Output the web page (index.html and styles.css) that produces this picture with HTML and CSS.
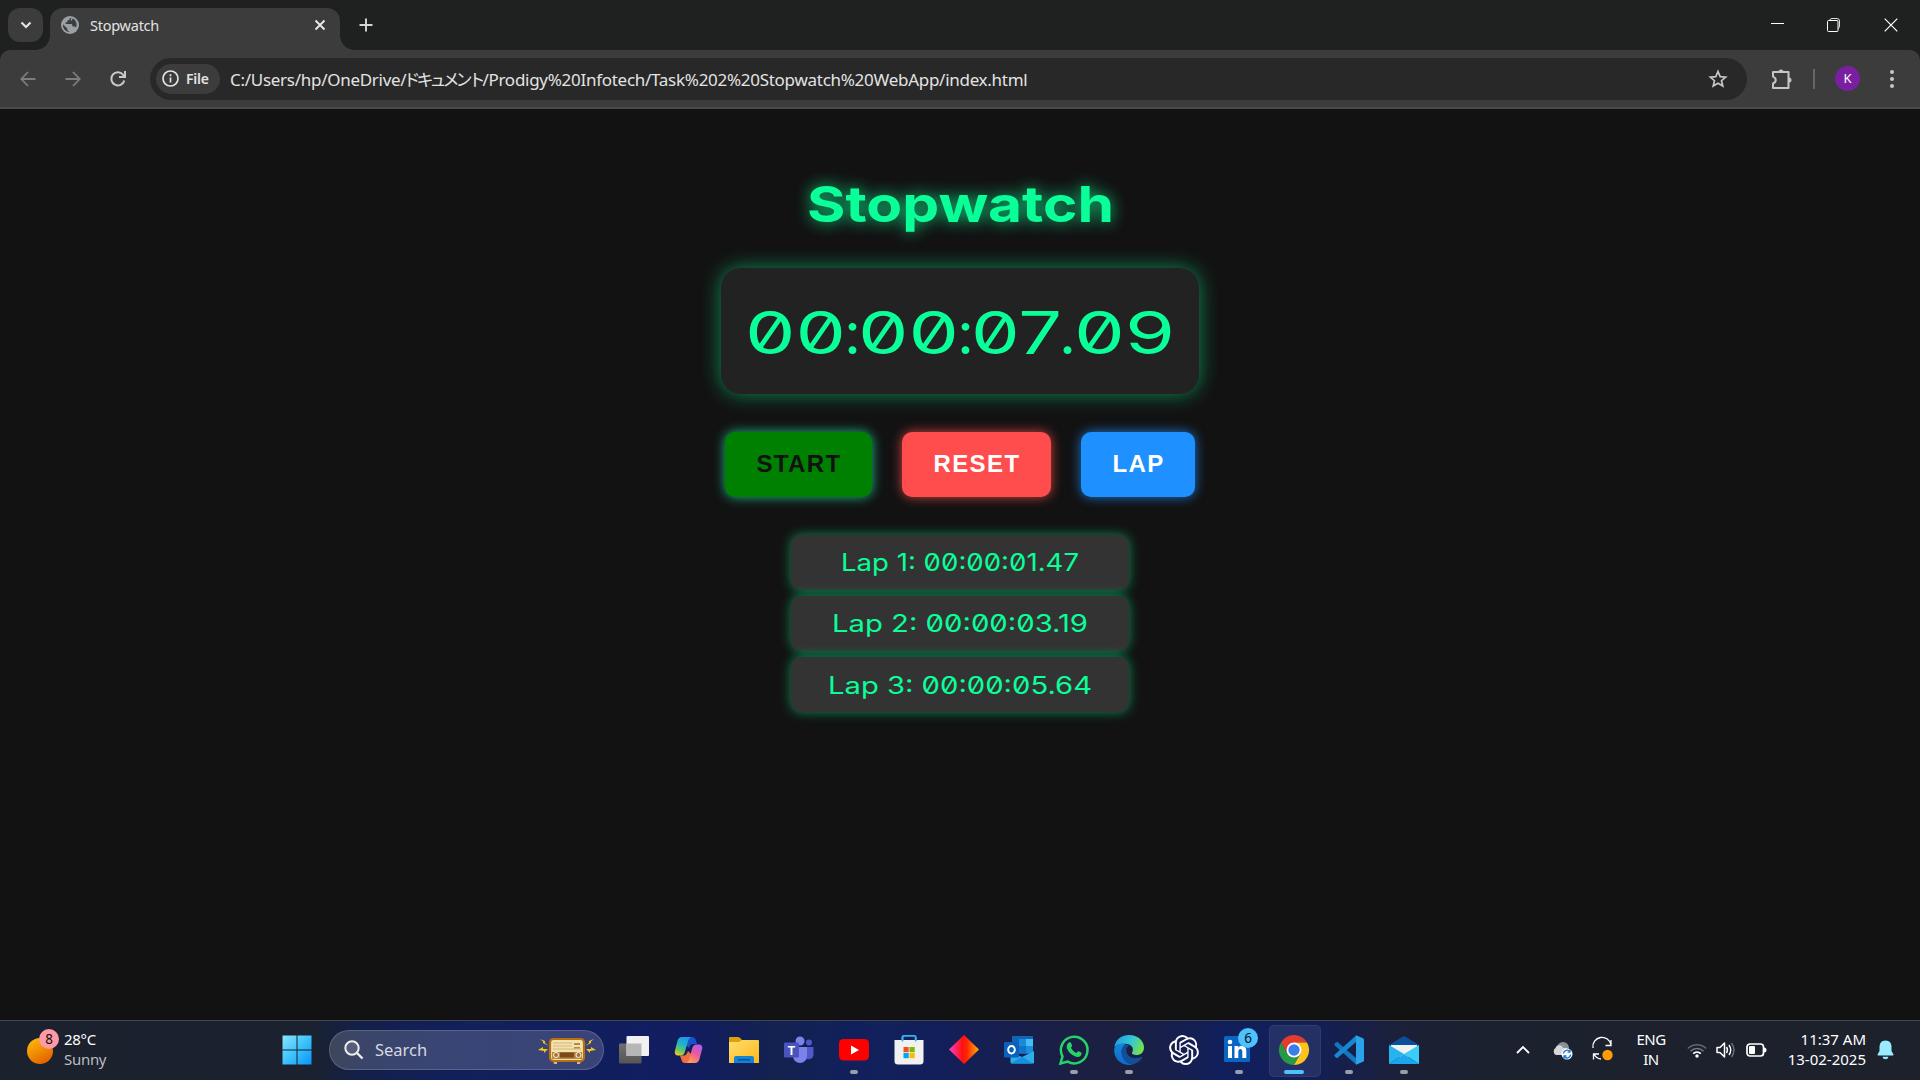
FILE: index.html
```html
<!DOCTYPE html>
<html lang="en">
<head>
<meta charset="utf-8">
<title>Stopwatch</title>
<link rel="stylesheet" href="styles.css">
</head>
<body>
<header class="tabstrip">
  <div class="tab-search"><svg width="12" height="8" viewBox="0 0 12 8"><path d="M1.500 1.500 6 6l4.500-4.500" fill="none" stroke="#e3e3e3" stroke-width="2.200"/></svg></div>
  <div class="tab">
    <svg class="globe" width="18" height="18" viewBox="0 0 18 18"><circle cx="9" cy="9" r="9" fill="#9aa0a6"/><path d="M10.500 1.800C9 2 8.200 3 8.200 4.300H6.400v1.900H4.600V8h5.200c1 0 1.700.7 1.700 1.700v.9h1.800c.8 0 1.500.5 1.700 1.200A7.200 7.200 0 0 0 11.700 2.300L11 4.500H9.500M1.900 8.200 6.300 12.500v.9c0 1 .8 1.700 1.800 1.700v1A7.200 7.200 0 0 1 1.900 8.200z" fill="#3c3c3c"/></svg>
    <span class="tab-title">Stopwatch</span>
    <svg width="12" height="12" viewBox="0 0 12 12"><path d="m1.500 1.500 9 9m0-9-9 9" stroke="#e8e8e8" stroke-width="1.900"/></svg>
  </div>
  <svg class="new-tab" width="14" height="14" viewBox="0 0 14 14"><path d="M7 .5v13M.5 7h13" stroke="#d5d5d5" stroke-width="1.900"/></svg>
  <div class="window-controls">
    <svg width="14" height="14" viewBox="0 0 14 14"><path d="M1 5.500h13" stroke="#fff"/></svg>
    <svg width="14" height="14" viewBox="0 0 14 14"><path d="M2.500 3V2.500Q3 .5 5 .5h5q2.500 0 2.500 2.500v5q0 2-1.500 2.500" fill="none" stroke="#ddd"/><rect x=".5" y="2.500" width="10.500" height="11" rx="1" fill="none" stroke="#fff"/></svg>
    <svg width="14" height="14" viewBox="0 0 14 14"><path d="m.7.700 12.600 12.600m0-12.600L.7 13.300" stroke="#fff" stroke-width="1.200"/></svg>
  </div>
</header>
<nav class="toolbar">
  <div class="nav-buttons">
    <svg width="16" height="16" viewBox="0 0 16 16"><path d="M15.500 8H1.500M8 1 1.300 8 8 15" fill="none" stroke="#7d7d7d" stroke-width="1.800"/></svg>
    <svg width="16" height="16" viewBox="0 0 16 16"><path d="M.5 8h14M8 1l6.700 7L8 15" fill="none" stroke="#7d7d7d" stroke-width="1.800"/></svg>
    <svg width="16" height="16" viewBox="0 0 16 16"><path d="M14.300 9.500A6.600 6.600 0 1 1 13 3.600l1.500 1.700M15 0v6H9" fill="none" stroke="#c9c9c9" stroke-width="2"/></svg>
  </div>
  <div class="omnibox">
    <div class="chip">
      <svg width="17" height="17" viewBox="0 0 17 17"><circle cx="8.500" cy="8.500" r="7.500" fill="none" stroke="#e3e3e3" stroke-width="1.700"/><path d="M8.500 7.500v5M8.500 4.300v1.900" stroke="#e3e3e3" stroke-width="1.700"/></svg>
      <span>File</span>
    </div>
    <span class="url">C:/Users/hp/OneDrive/<span class="kana">ドキュメント</span>/Prodigy%20Infotech/Task%202%20Stopwatch%20WebApp/index.html</span>
    <svg class="star" width="20" height="20" viewBox="0 0 20 20"><path d="m10 2.500 2.200 5.100 5.500.5-4.200 3.600 1.300 5.400L10 14.300l-4.800 2.800 1.300-5.400L2.300 8.100l5.500-.5z" fill="none" stroke="#c7c7c7" stroke-width="1.700"/></svg>
  </div>
  <div class="actions">
    <svg width="22" height="22" viewBox="0 0 22 22"><path d="M2 4h15.500v16H2v-4.600q2.700-.9 2.700-3.400T2 8.600z" fill="none" stroke="#c7c7c7" stroke-width="2" stroke-linejoin="round"/><path d="M7.500 4a2.500 2.500 0 0 1 5 0M18 9.500a2.500 2.500 0 0 1 0 5" fill="#c7c7c7"/></svg>
    <span class="divider"></span>
    <span class="avatar">K</span>
    <svg width="6" height="20" viewBox="0 0 6 20"><g fill="#c7c7c7"><circle cx="3" cy="3" r="2"/><circle cx="3" cy="10" r="2"/><circle cx="3" cy="17" r="2"/></g></svg>
  </div>
</nav>
<main class="page">
  <svg class="title" width="344" height="80"><text x="19" y="53" textLength="307" lengthAdjust="spacingAndGlyphs">Stopwatch</text></svg>
  <section class="display"><svg width="478" height="126"><text y="86"><tspan x="24" textLength="101" lengthAdjust="spacingAndGlyphs">00</tspan><tspan x="123">:</tspan><tspan x="137" textLength="101" lengthAdjust="spacingAndGlyphs">00</tspan><tspan x="236">:</tspan><tspan x="250" textLength="91" lengthAdjust="spacingAndGlyphs">07</tspan><tspan x="338">.</tspan><tspan x="353" textLength="101" lengthAdjust="spacingAndGlyphs">09</tspan></text></svg></section>
  <div class="buttons">
    <button class="btn start">START</button>
    <button class="btn reset">RESET</button>
    <button class="btn lap">LAP</button>
  </div>
  <ul class="laps">
    <li><svg width="338" height="55"><text x="50" y="36" textLength="238" lengthAdjust="spacingAndGlyphs">Lap 1: 00:00:01.47</text></svg></li>
    <li><svg width="338" height="55"><text x="41" y="36" textLength="256" lengthAdjust="spacingAndGlyphs">Lap 2: 00:00:03.19</text></svg></li>
    <li><svg width="338" height="55"><text x="37" y="37" textLength="264" lengthAdjust="spacingAndGlyphs">Lap 3: 00:00:05.64</text></svg></li>
  </ul>
</main>
<footer class="taskbar">
  <div class="weather">
    <svg width="34" height="38" viewBox="0 0 34 38"><defs><linearGradient id="sun" x1="0" y1="0" x2=".6" y2="1"><stop offset="0" stop-color="#ffc20a"/><stop offset="1" stop-color="#e56300"/></linearGradient></defs><circle cx="14" cy="23" r="13" fill="url(#sun)"/><circle cx="23" cy="11" r="10" fill="#ff99a4"/><text x="23" y="16" text-anchor="middle" class="badge-text">8</text></svg>
    <div class="weather-text"><span>28°C</span><span class="dim">Sunny</span></div>
  </div>
  <div class="slot"><svg width="30" height="30" viewBox="0 0 30 30"><defs><linearGradient id="win" x1="0" y1="0" x2="1" y2="1"><stop offset="0" stop-color="#8ae4ff"/><stop offset=".5" stop-color="#3cc3fb"/><stop offset="1" stop-color="#0a94f8"/></linearGradient></defs><path d="M.5.500h14v14H.5zM15.500.500h14v14h-14zM.5 15.500h14v14H.5zM15.500 15.500h14v14h-14z" fill="url(#win)"/></svg></div>
  <div class="search">
    <svg width="20" height="20" viewBox="0 0 20 20"><circle cx="8" cy="8" r="6.700" fill="#ffffff22" stroke="#eee" stroke-width="2"/><path d="m13 13 5.500 5.500" stroke="#eee" stroke-width="2.400"/></svg>
    <span>Search</span>
    <svg class="radio" width="58" height="28" viewBox="0 0 58 28"><g fill="#f5c518"><path d="m2 3 5 2v2l4 3-6-3V5.500zM0 14l5-3v2h5l-4 4v-2zM56 3l-5 2v2l-4 3 6-3V5.500zM58 14l-5-3v2h-5l4 4v-2z"/></g><path d="M15 25h4v3h-3zM39 25h4l-1 3h-3z" fill="#d9b67a"/><rect x="12" y="3" width="34" height="22" rx="3.500" fill="#f3e2b0" stroke="#b8700f" stroke-width="2.200"/><path d="M15 7h19M15 10h19M15 13h28" stroke="#c9ad6a" stroke-width=".8"/><path d="M36 7h6v2h-6zM36 11h6v1.500h-6z" fill="#b88a3c"/><path d="M14 16h30v7H14z" fill="#b58a48"/><path d="M22 16.500h14v5H22z" fill="#7c4a16"/><circle cx="18" cy="19" r="2.500" fill="#9b7542" stroke="#fff3cf"/><circle cx="40.500" cy="19" r="2.500" fill="#9b7542" stroke="#fff3cf"/></svg>
  </div>
  <div class="apps">
    <div class="slot"><svg width="30" height="30" viewBox="0 0 30 30"><defs><linearGradient id="tv" x1="0" y1="0" x2="0" y2="1"><stop offset="0" stop-color="#707070"/><stop offset="1" stop-color="#555"/></linearGradient></defs><rect y="8.500" width="22.500" height="20" rx="1" fill="url(#tv)"/><rect x="7.500" y="1" width="22.500" height="20" rx="1" fill="#f1f1f1"/><path d="M7.500 8.500h15V21h-15z" fill="#b6b6b6"/></svg></div>
    <div class="slot"><svg width="30" height="30" viewBox="0 0 30 30"><defs><linearGradient id="cpa" x1=".6" y1="0" x2=".2" y2="1"><stop offset="0" stop-color="#2095ee"/><stop offset=".4" stop-color="#1db7c5"/><stop offset=".75" stop-color="#74c65d"/><stop offset="1" stop-color="#f6cd13"/></linearGradient><linearGradient id="cpb" x1=".8" y1="0" x2=".3" y2="1"><stop offset="0" stop-color="#b05af0"/><stop offset=".5" stop-color="#ea5a9b"/><stop offset="1" stop-color="#ff9e55"/></linearGradient></defs><path d="M13 2h5c2 0 3.200 1 3.800 3L23 9h-4c-2 0-3 1-4 4l-3-3z" fill="#1754c9"/><path d="M16 28h-5c-2 0-3-1-3.500-3L6 20.500h4c2 0 3-2 4-4.500l3 3z" fill="#ef703c"/><path d="M8 2h9c-2 1-2.700 3-3.200 5l-2.800 9.500c-.8 3-2.200 4-4.200 4H4.500c-3 0-4.300-2-3.500-5L3.500 6C4.200 3.200 5.500 2 8 2z" fill="url(#cpa)"/><path d="M21 28h-8.500c2-1 2.500-3 3-5l2.700-9.500c.8-3 2.200-4 4.200-4h2.300c3 0 4.200 2 3.300 5L25.500 24c-.8 2.800-2 4-4.500 4z" fill="url(#cpb)"/></svg></div>
    <div class="slot"><svg width="30" height="30" viewBox="0 0 30 30"><defs><linearGradient id="fo" x1="0" y1="0" x2="1" y2="1"><stop offset="0" stop-color="#ffdf6e"/><stop offset="1" stop-color="#fbb81b"/></linearGradient></defs><path d="M0 3q0-1 1-1h8q2 0 4 3h8v8H0z" fill="#dfa00c"/><path d="M0 7h10l3-2h16q1 0 1 1v22H0z" fill="url(#fo)"/><path d="M5 28v-5q0-2 2-2h16q2 0 2 2v5z" fill="#1383d4"/><path d="M9 24.700h12" stroke="#084b86" stroke-width="1.300"/></svg></div>
    <div class="slot"><svg width="30" height="30" viewBox="0 0 30 30"><circle cx="16" cy="6" r="4.500" fill="#7b83eb"/><circle cx="25" cy="7.500" r="3" fill="#5059c9"/><path d="M20 12h9.500v7.500a5 5 0 0 1-9.500 2z" fill="#5059c9"/><path d="M9 12h14v9a7 7 0 0 1-14 0z" fill="#7b83eb"/><rect y="7.500" width="15" height="15" rx="1.200" fill="#4b53bc"/><text x="7.500" y="19.500" text-anchor="middle" class="logo-t">T</text></svg></div>
    <div class="slot running"><svg width="30" height="30" viewBox="0 0 30 30"><rect y="4" width="30" height="21.500" rx="4.500" fill="#f00"/><path d="m12 10.500 8 4.500-8 4.500z" fill="#fff"/></svg></div>
    <div class="slot"><svg width="30" height="30" viewBox="0 0 30 30"><path d="M8.500 8V2q0-1.200 1.200-1.200h10.800q1.200 0 1.200 1.200v6" fill="none" stroke="#31b7ef" stroke-width="1.800"/><path d="M.5 5h29v21q0 3.500-3.500 3.500H4Q.5 29.500.5 26z" fill="#f1f1f1"/><path d="M8.500 2v4.500M21.700 2v4.500" stroke="#31b7ef" stroke-width="1.700"/><path d="M9.500 12h5.200v5.200H9.500z" fill="#f25022"/><path d="M15.500 12h5.200v5.200h-5.200z" fill="#7fba00"/><path d="M9.500 18h5.200v5.200H9.500z" fill="#00a4ef"/><path d="M15.500 18h5.200v5.200h-5.200z" fill="#ffb900"/></svg></div>
    <div class="slot"><svg width="30" height="30" viewBox="0 0 30 30"><defs><linearGradient id="dm"><stop offset="0" stop-color="#ff3fc5"/><stop offset=".45" stop-color="#ff1010"/><stop offset=".6" stop-color="#ff2600"/><stop offset="1" stop-color="#ffb300"/></linearGradient></defs><path d="m15 0 15 14.500L15 29 0 14.500z" fill="url(#dm)"/></svg></div>
    <div class="slot"><svg width="30" height="30" viewBox="0 0 30 30"><path d="M9 1h19q1 0 1 1v17H8V2q0-1 1-1z" fill="#1066b5"/><path d="M15 4h7v7h-7z" fill="#1b8ad8"/><path d="M22 4h7v7h-7z" fill="#42c0f5"/><path d="M15 11h7v7h-7z" fill="#1473c5"/><path d="M22 11h7v7h-7z" fill="#1b8fdf"/><path d="M6.500 17 18 22l12-6v11.500q0 1-1 1H8q-1.500 0-1.500-1.500z" fill="#2daee8"/><path d="m7 28.500 11-7 11 7z" fill="#1490df"/><rect y="7" width="15" height="15.500" rx="1.200" fill="#0a61bd"/><ellipse cx="7.500" cy="14.700" rx="3.300" ry="3.700" fill="none" stroke="#fff" stroke-width="2"/></svg></div>
    <div class="slot running"><svg width="30" height="30" viewBox="0 0 30 30"><path d="m1.500 28.500 2-7.200A13.300 13.300 0 1 1 8.700 26.600z" fill="none" stroke="#25d366" stroke-width="2.500"/><path d="M10 7.500c1-.6 1.800-.2 2.100.6l1 2.600c.2.500-.8 1.500-1.200 2 1.200 2.300 3 4 5.400 5.200.5-.4 1.500-2 2.200-1.700l2.700 1.400c.8.400.2 2.500-.7 3.300-1.300 1.200-3 1.400-5.200.6-4-1.500-7-4.600-8.300-8-.7-2.300 0-4.900 2-6z" fill="#25d366"/></svg></div>
    <div class="slot running"><svg width="30" height="30" viewBox="0 0 30 30"><defs><linearGradient id="ed" x1="0" y1=".2" x2="1" y2=".5"><stop offset="0" stop-color="#1e9be0"/><stop offset=".55" stop-color="#33c6d8"/><stop offset="1" stop-color="#72e34b"/></linearGradient><linearGradient id="ee" x1="0" y1="0" x2="0" y2="1"><stop offset="0" stop-color="#1387da"/><stop offset="1" stop-color="#1069c9"/></linearGradient></defs><path d="M.3 13C1 5 7 0 15 0c9 0 15 6 15 12.500 0 5-3.500 7.500-7.500 7.500-3.500 0-5-1.300-4.500-2.500 2-2.500 1-7.500-4.500-8.500C8 8 2 9 .3 13z" fill="url(#ed)"/><path d="M.2 14C2 9 7 7.500 12 9.500c-4 2-5 6-4 10 1 5 5 9 11 9.800C9 32-.5 25 .2 14z" fill="url(#ee)"/><path d="M12.500 9.500C7 12 6.500 18 9 22.500c2.300 4 6 6.500 10 6.700 4-1 7-3.200 9-6.300.5-1-.3-1.300-1-.9-6 2.500-15 .5-14.700-7 0-2.500 1.200-4.200 3.700-4.500z" fill="#114f9b"/></svg></div>
    <div class="slot"><svg width="30" height="30" viewBox="0 0 24 24" fill="#fff"><path d="M22.280 9.820a5.980 5.980 0 0 0-.52-4.910 6.050 6.050 0 0 0-6.510-2.900A6.070 6.070 0 0 0 4.980 4.180a5.980 5.980 0 0 0-4 2.900 6.050 6.050 0 0 0 .74 7.100 5.980 5.980 0 0 0 .51 4.910 6.050 6.050 0 0 0 6.520 2.900A5.980 5.980 0 0 0 13.260 24a6.060 6.060 0 0 0 5.770-4.210 5.990 5.990 0 0 0 4-2.900 6.060 6.060 0 0 0-.75-7.070zm-9.020 12.610a4.480 4.480 0 0 1-2.880-1.040l.14-.08 4.780-2.760a.8.8 0 0 0 .39-.68v-6.740l2.020 1.170a.07.07 0 0 1 .04.050v5.580a4.500 4.500 0 0 1-4.490 4.490zM3.600 18.300a4.470 4.470 0 0 1-.540-3.010l.14.090 4.780 2.760a.77.77 0 0 0 .78 0l5.840-3.370v2.330a.08.08 0 0 1-.03.060L9.740 19.950a4.500 4.500 0 0 1-6.140-1.650zM2.340 7.900a4.490 4.490 0 0 1 2.370-1.980v5.680a.77.77 0 0 0 .39.680l5.810 3.350-2.020 1.170a.08.08 0 0 1-.07 0l-4.830-2.790A4.500 4.500 0 0 1 2.340 7.870zm16.600 3.860L13.100 8.360l2.020-1.160a.08.08 0 0 1 .07 0l4.830 2.790a4.490 4.490 0 0 1-.68 8.100v-5.680a.79.79 0 0 0-.4-.650zm2.010-3.020-.14-.09-4.770-2.780a.78.78 0 0 0-.79 0L9.410 9.230V6.900a.07.07 0 0 1 .03-.06l4.830-2.790a4.500 4.500 0 0 1 6.680 4.660zM8.310 12.860l-2.020-1.160a.08.08 0 0 1-.04-.06V6.070a4.500 4.500 0 0 1 7.380-3.450l-.14.080-4.780 2.760a.8.8 0 0 0-.4.680zm1.100-2.370 2.600-1.500 2.610 1.500v3l-2.600 1.500-2.610-1.500z"/></svg></div>
    <div class="slot running"><svg width="36" height="36" viewBox="0 0 36 36" class="linkedin"><rect x="3" y="5" width="26" height="26" rx="1.500" fill="#0a66c2"/><path d="M7 15h4v12H7zM13.500 15h3.800v1.800c2-3.200 8-2.500 8 2.700V27h-4v-6.500c0-3.500-4-3.300-4 0V27h-3.800z" fill="#fff"/><circle cx="9" cy="11" r="2.300" fill="#fff"/><circle cx="27" cy="7" r="10" fill="#4cc2ff"/><text x="27" y="12" text-anchor="middle" class="badge-text">6</text></svg></div>
    <div class="slot running active"><svg width="30" height="30" viewBox="0 0 30 30"><path d="M2 7.500A15 15 0 0 1 28 7.500H15L8.500 18.700z" fill="#e33b2e"/><path d="M2 7.500A15 15 0 0 0 15 30l6.500-11.200H8.500z" fill="#279847"/><path d="M28 7.500A15 15 0 0 1 15 30l6.500-11.200L15 7.500z" fill="#fcc31e"/><circle cx="15" cy="15" r="7.500" fill="#fff"/><circle cx="15" cy="15" r="5.700" fill="#3b7ded"/></svg></div>
    <div class="slot running"><svg width="30" height="30" viewBox="0 0 30 30"><path d="m3.500 7 18.500 16v6.500L.8 10.500q-1-1 0-2l1-1q.8-.9 1.700-.5z" fill="#1277bd"/><path d="M3.500 23 22 7V.500L.8 19.500q-1 1 0 2l1 1q.8.900 1.700.5z" fill="#1687d0"/><path d="M22 .300 29 3.200q1 .5 1 1.500v20.600q0 1-1 1.500l-7 2.900z" fill="#2ba3ea"/></svg></div>
    <div class="slot running"><svg width="30" height="30" viewBox="0 0 30 30"><path d="M0 10 14 1.500q1-.6 2 0L30 10v10H0z" fill="#0b4f9c"/><path d="M2 10h26v8l-13 6-13-6z" fill="#f1f1f1"/><path d="M0 10l15 9-15 10z" fill="#27b4ee"/><path d="m30 10-15 9 15 10z" fill="#39cdfa"/><path d="M0 29h30L15 19z" fill="#1ba7ec"/></svg></div>
  </div>
  <div class="tray">
    <svg width="14" height="9" viewBox="0 0 14 9"><path d="m1 8 6-6 6 6" fill="none" stroke="#fff" stroke-width="1.800"/></svg>
    <svg class="cloud" width="21" height="20" viewBox="0 0 21 20"><circle cx="11" cy="8" r="6" fill="#8b8f96"/><path d="M4 15a4 4 0 0 1-.5-7C5 4 10 5 11 8h4v7z" fill="#d5d7da"/><circle cx="15" cy="14" r="5.500" fill="#fff"/><path d="M11.500 13.500a3.600 3.600 0 0 1 6.500-1.800m0-2v2.500h-2.500M18.500 14.500a3.600 3.600 0 0 1-6.500 2m0 2V16h2.500" fill="none" stroke="#1478d4" stroke-width="1.300"/></svg>
    <svg class="sync" width="22" height="22" viewBox="0 0 22 22"><path d="M1 9A9 9 0 0 1 19 6M19 1v5.500h-5.500M9 20q-5-.5-7-5M1.500 20.500V15H7" fill="none" stroke="#fff" stroke-width="1.300"/><circle cx="15.500" cy="16" r="5.200" fill="#ff9a0a"/></svg>
    <div class="lang"><span>ENG</span><span>IN</span></div>
    <svg class="wifi" width="20" height="16" viewBox="0 0 20 16"><path d="M.8 6.500a13 13 0 0 1 18.400 0" fill="none" stroke="#62666f" stroke-width="1.500"/><path d="M3.500 9.200a9.200 9.200 0 0 1 13 0" fill="none" stroke="#777b83" stroke-width="1.500"/><path d="M6.200 11.700a5.500 5.500 0 0 1 7.600 0" fill="none" stroke="#fff" stroke-width="1.700"/><circle cx="10" cy="14" r="1.700" fill="#fff"/></svg>
    <svg class="volume" width="20" height="18" viewBox="0 0 20 18"><path d="M1 6.500h3L8.500 2v14L4 11.500H1z" fill="none" stroke="#fff" stroke-width="1.500" stroke-linejoin="round"/><path d="M10.500 6q2 3 0 6M13 4q3.500 5 0 10" fill="none" stroke="#fff" stroke-width="1.400"/><path d="M15.500 2q5 7 0 14" fill="none" stroke="#6d7179" stroke-width="1.400"/></svg>
    <svg class="battery" width="21" height="14" viewBox="0 0 21 14"><rect x="1" y="1" width="16.500" height="12" rx="3" fill="none" stroke="#fff" stroke-width="1.700"/><rect x="3" y="3" width="6" height="8" rx="1" fill="#fff"/><path d="M18 4.500q2.500 0 2.500 2.500T18 9.500z" fill="#fff"/></svg>
    <div class="clock"><span class="time">11:37 AM</span><span class="date">13-02-2025</span></div>
    <svg class="bell" width="17" height="20" viewBox="0 0 17 20"><path d="M8.500.500c4 0 6 2.800 6 6.500v4l2 3.500q.3 1-.8 1H1.300q-1.100 0-.8-1l2-3.500V7c0-3.700 2-6.500 6-6.500zM5.500 16.700h6q-.5 2.500-3 2.500t-3-2.500z" fill="#99ebff"/></svg>
  </div>
</footer>
</body>
</html>
```
FILE: styles.css
```css
* { box-sizing: border-box; }
svg { display: block; flex: none; overflow: visible; }
body {
  margin: 0; width: 1920px; height: 1080px; overflow: hidden;
  display: flex; flex-direction: column;
  background: #121212;
  font-family: "Noto Sans", "Noto Sans CJK JP", sans-serif;
}

/* Browser frame */
.tabstrip { position: relative; z-index: 1; height: 50px; background: #1f2120; display: flex; align-items: flex-start; padding: 8px 0 0 8px; }
.tab-search { width: 35px; height: 34px; border-radius: 12px; background: #3c3c3c; display: grid; place-items: center; margin-right: 7px; }
.tab { position: relative; width: 290px; height: 42px; border-radius: 13px 13px 0 0; background: #3c3c3c; display: flex; align-items: center; padding: 0 14px 8px 11px; color: #e3e3e3; font-size: 14.500px; }
.tab::before, .tab::after { content: ""; position: absolute; bottom: 0; width: 14px; height: 14px; }
.tab::before { left: -14px; background: radial-gradient(circle at 0 0, transparent 13.500px, #3c3c3c 14px); }
.tab::after { right: -14px; background: radial-gradient(circle at 100% 0, transparent 13.500px, #3c3c3c 14px); }
.tab-title { flex: 1; padding-left: 11px; letter-spacing: -0.250px; }
.new-tab { margin: 10px 0 0 19px; }
.window-controls { margin-left: auto; display: flex; gap: 43px; padding: 10px 22px 0 0; }
.toolbar { position: relative; z-index: 0; height: 59px; background: #3c3c3c; border-bottom: 2px solid #4a4a4a; border-radius: 10px 10px 0 0; display: flex; align-items: center; box-shadow: 0 -10px 0 #1f2120; }
.nav-buttons { width: 150px; padding-left: 20px; display: flex; gap: 29px; }
.omnibox { width: 1597px; height: 42px; border-radius: 21px; background: #282828; display: flex; align-items: center; padding: 0 19px 0 6px; }
.chip { width: 64px; height: 30px; border-radius: 15px; background: #3c3c3c; display: flex; align-items: center; padding-left: 6px; gap: 7px; color: #e3e3e3; font-size: 14px; font-weight: 600; letter-spacing: -0.200px; }
.url { margin-left: 10px; flex: 1; font-size: 17px; letter-spacing: -0.280px; color: #e3e3e3; white-space: nowrap; }
.kana { display: inline-block; letter-spacing: -4px; margin: 0 1px 0 -3px; }
.actions { flex: 1; display: flex; align-items: center; padding-left: 24px; }
.divider { width: 2px; height: 20px; background: #666; margin: 0 20px 0 20px; }
.avatar { width: 25px; height: 25px; border-radius: 50%; background: #7b1fa2; color: #fff; font-size: 13px; line-height: 25px; text-align: center; margin-right: 29px; }

/* Stopwatch */
.page { flex: 1; display: flex; flex-direction: column; align-items: center; padding-top: 60px; }
.page text { font-family: Inter, sans-serif; font-feature-settings: "zero" 1; fill: #0aff99; }
.title text { font-size: 50px; font-weight: 700; filter: drop-shadow(0 0 8px rgba(10, 255, 153, .8)); }
.display { margin-top: 19px; height: 126px; border-radius: 20px; background: #222; box-shadow: 0 0 20px rgba(10, 255, 153, .5); }
.display text { font-size: 59px; font-weight: 400; }
.buttons { display: flex; gap: 30px; margin-top: 38px; }
.btn { height: 65px; padding: 0 0 1px 1px; border: 0; border-radius: 10px; font: bold 24px "Liberation Sans", sans-serif; letter-spacing: 1.400px; color: #fff; }
.start { width: 147px; background: #008000; color: #121212; box-shadow: 0 0 12px #1eb88a; }
.reset { width: 149px; background: #ff4d4d; box-shadow: 0 0 12px rgba(255, 77, 77, .8); }
.lap { width: 114px; background: #1e90ff; box-shadow: 0 0 12px rgba(30, 144, 255, .8); }
.laps { list-style: none; margin: 38px 0 0; padding: 0; display: flex; flex-direction: column; gap: 6px; }
.laps li { height: 55px; border-radius: 10px; background: #333; box-shadow: 0 0 12px rgba(10, 255, 153, .5); }
.laps text { font-size: 24px; font-weight: 400; }

/* Windows taskbar */
.taskbar {
  height: 60px; border-top: 1px solid #42454f; display: flex; align-items: center; color: #fff; font-size: 15px; padding-bottom: 2px;
  background: linear-gradient(90deg, #1c212e 0, #1b212e 310px, #13204a 360px, #12205a 450px, #111d60 690px, #13224f 780px, #11205c 850px, #131f5a 940px, #1b1f42 1080px, #1b2040 1130px, #111f5c 1220px, #121f58 1310px, #1c2038 1400px, #1b212e 1480px, #1d212b 1920px);
}
.weather { width: 269px; padding-left: 26px; display: flex; gap: 4px; align-items: center; }
.weather > svg { margin-top: -5px; }
.weather-text, .lang, .clock { display: flex; flex-direction: column; line-height: 20px; letter-spacing: -0.300px; margin-top: -2px; }
.dim { color: #b9bbc1; }
.badge-text { font: 13.500px "Noto Sans", sans-serif; fill: #111; }
.logo-t { font: bold 12px "Liberation Sans", sans-serif; fill: #fff; }
.slot { width: 55px; height: 57px; display: grid; place-items: center; position: relative; flex: none; }
.slot svg { position: relative; z-index: 1; }
.search { margin: 0 2px 0 5px; width: 275px; height: 40px; border-radius: 20px; background: rgba(255, 255, 255, .17); border: 1px solid rgba(255, 255, 255, .16); display: flex; align-items: center; padding: 0 7px 0 14px; color: #d6d9e2; font-size: 16.500px; }
.search span { flex: 1; padding-left: 11px; }
.apps { display: flex; }
.running::after { content: ""; position: absolute; bottom: 4px; left: 23.500px; width: 8px; height: 4px; border-radius: 2px; background: #9b9da9; }
.active::before { content: ""; position: absolute; left: 3px; top: 4px; width: 50px; height: 50px; border-radius: 5px; background: rgba(255, 255, 255, .08); border: 1px solid rgba(255, 255, 255, .06); }
.active::after { width: 20px; left: 17.500px; background: #4cc2ff; z-index: 1; }
.linkedin { margin-top: -1px; }
.tray { margin-left: 85px; flex: 1; display: flex; align-items: center; }
.cloud { margin-left: 22px; }
.sync { margin-left: 19px; }
.lang { width: 40px; text-align: center; margin-left: 17px; letter-spacing: -0.500px; }
.wifi { margin-left: 16px; }
.volume { margin-left: 9px; }
.battery { margin-left: 10px; }
.clock { margin-left: auto; text-align: right; letter-spacing: 0; }
.bell { margin: 0 26px 0 11px; }
```
